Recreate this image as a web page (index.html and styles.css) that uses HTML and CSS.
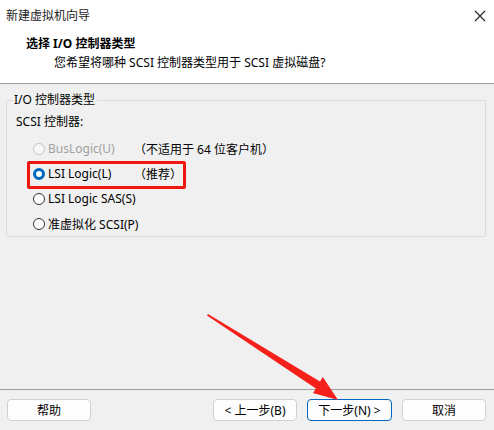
FILE: index.html
```html
<!DOCTYPE html>
<html lang="zh-CN">
<head>
    <meta charset="UTF-8">
    <title>新建虚拟机向导</title>
    <link rel="stylesheet" href="styles.css">
</head>
<body>
    <div class="window">
        <div class="titlebar">
            <span class="title">新建虚拟机向导</span>
            <span class="close">
                <svg width="12" height="12" viewBox="0 0 12 12"><path d="M1 1 L11 11 M11 1 L1 11" stroke="#222" stroke-width="1.1"/></svg>
            </span>
        </div>

        <div class="header">
            <div class="header-title">选择 I/O 控制器类型</div>
            <div class="header-sub">您希望将哪种 SCSI 控制器类型用于 SCSI 虚拟磁盘?</div>
        </div>

        <div class="content">
            <fieldset class="group">
                <legend>I/O 控制器类型</legend>
                <div class="label">SCSI 控制器:</div>

                <div class="option disabled">
                    <span class="radio"></span>
                    <span class="opt-name">BusLogic(U)</span>
                    <span class="opt-note">（不适用于 64 位客户机）</span>
                </div>
                <div class="option highlight">
                    <span class="radio checked"></span>
                    <span class="opt-name">LSI Logic(L)</span>
                    <span class="opt-note">（推荐）</span>
                </div>
                <div class="option">
                    <span class="radio"></span>
                    <span class="opt-name">LSI Logic SAS(S)</span>
                </div>
                <div class="option">
                    <span class="radio"></span>
                    <span class="opt-name">准虚拟化 SCSI(P)</span>
                </div>
            </fieldset>
        </div>

        <div class="footer">
            <button class="btn">帮助</button>
            <div class="spacer"></div>
            <button class="btn">&lt; 上一步(B)</button>
            <button class="btn primary">下一步(N) &gt;</button>
            <button class="btn">取消</button>
        </div>

        <!-- 标注箭头 -->
        <svg class="arrow" width="494" height="430" viewBox="0 0 494 430">
            <polygon points="208,314 320,381.6 322.8,377 338,400 313,393 315.9,388.4 207,315.5" fill="#f5201a"/>
        </svg>
    </div>
</body>
</html>
```

FILE: styles.css
```css
body {
    margin: 0;
    font-family: "Noto Sans", "Noto Sans CJK SC", sans-serif;
    font-size: 12px;
    color: #000;
    background: #f0f0f0;
}

.window {
    position: relative;
    width: 494px;
    height: 430px;
    display: flex;
    flex-direction: column;
    overflow: hidden;
}

.titlebar {
    height: 30px;
    background: #fff;
    display: flex;
    align-items: center;
    justify-content: space-between;
    padding: 0 8px 0 6px;
}

.title {
    font-size: 12px;
    color: #1a1a1a;
}

.close {
    display: flex;
    padding-top: 2px;
}

.header {
    height: 54px;
    background: #fff;
    border-bottom: 1px solid #a0a0a0;
    padding-left: 26px;
    box-sizing: border-box;
    padding-top: 5px;
}

.header-title {
    font-weight: bold;
    font-size: 12px;
    line-height: 18px;
}

.header-sub {
    padding-left: 28px;
    line-height: 20px;
}

.content {
    flex: 1;
    padding: 9px 8px 0 6px;
}

.group {
    margin: 0;
    border: 1px solid #dcdcdc;
    border-radius: 2px;
    padding: 6px 10px 8px 9px;
    height: 144px;
    box-sizing: border-box;
}

.group legend {
    padding: 0 2px 0 1px;
    margin-left: -3px;
    line-height: 14px;
}

.label {
    line-height: 18px;
    margin-bottom: 5px;
}

.option {
    display: flex;
    align-items: center;
    height: 25px;
    padding-left: 17px;
    position: relative;
    width: 145px;
    box-sizing: border-box;
}

.option.disabled {
    color: #a0a0a0;
}

.radio {
    width: 12px;
    height: 12px;
    border: 1px solid #333;
    border-radius: 50%;
    margin-right: 3px;
    box-sizing: border-box;
    background: #fff;
    flex: none;
}

.disabled .radio {
    border-color: #c4c4c4;
    background: #f6f6f6;
}

.radio.checked {
    border: 3.5px solid #0067c0;
    background: #fff;
}

.opt-name {
    white-space: nowrap;
}

.opt-note {
    position: absolute;
    left: 118px;
    white-space: nowrap;
    color: #000;
}

.highlight::before {
    content: "";
    position: absolute;
    left: 11px;
    top: 0;
    width: 159px;
    height: 28px;
    border: 3px solid #f0160e;
    border-radius: 2px;
    box-sizing: border-box;
}

.footer {
    height: 41px;
    border-top: 1px solid #a0a0a0;
    display: flex;
    align-items: flex-start;
    padding: 9px 8px 0 7px;
    gap: 10px;
    box-sizing: border-box;
}

.spacer {
    flex: 1;
}

.btn {
    width: 84px;
    height: 22px;
    border: 1px solid #d0d0d0;
    border-radius: 4px;
    background: #fdfdfd;
    font-family: inherit;
    font-size: 12px;
    color: #000;
    padding: 0;
}

.btn.primary {
    width: 85px;
    border-color: #0067c0;
}

.arrow {
    position: absolute;
    left: 0;
    top: 0;
    pointer-events: none;
}
```
